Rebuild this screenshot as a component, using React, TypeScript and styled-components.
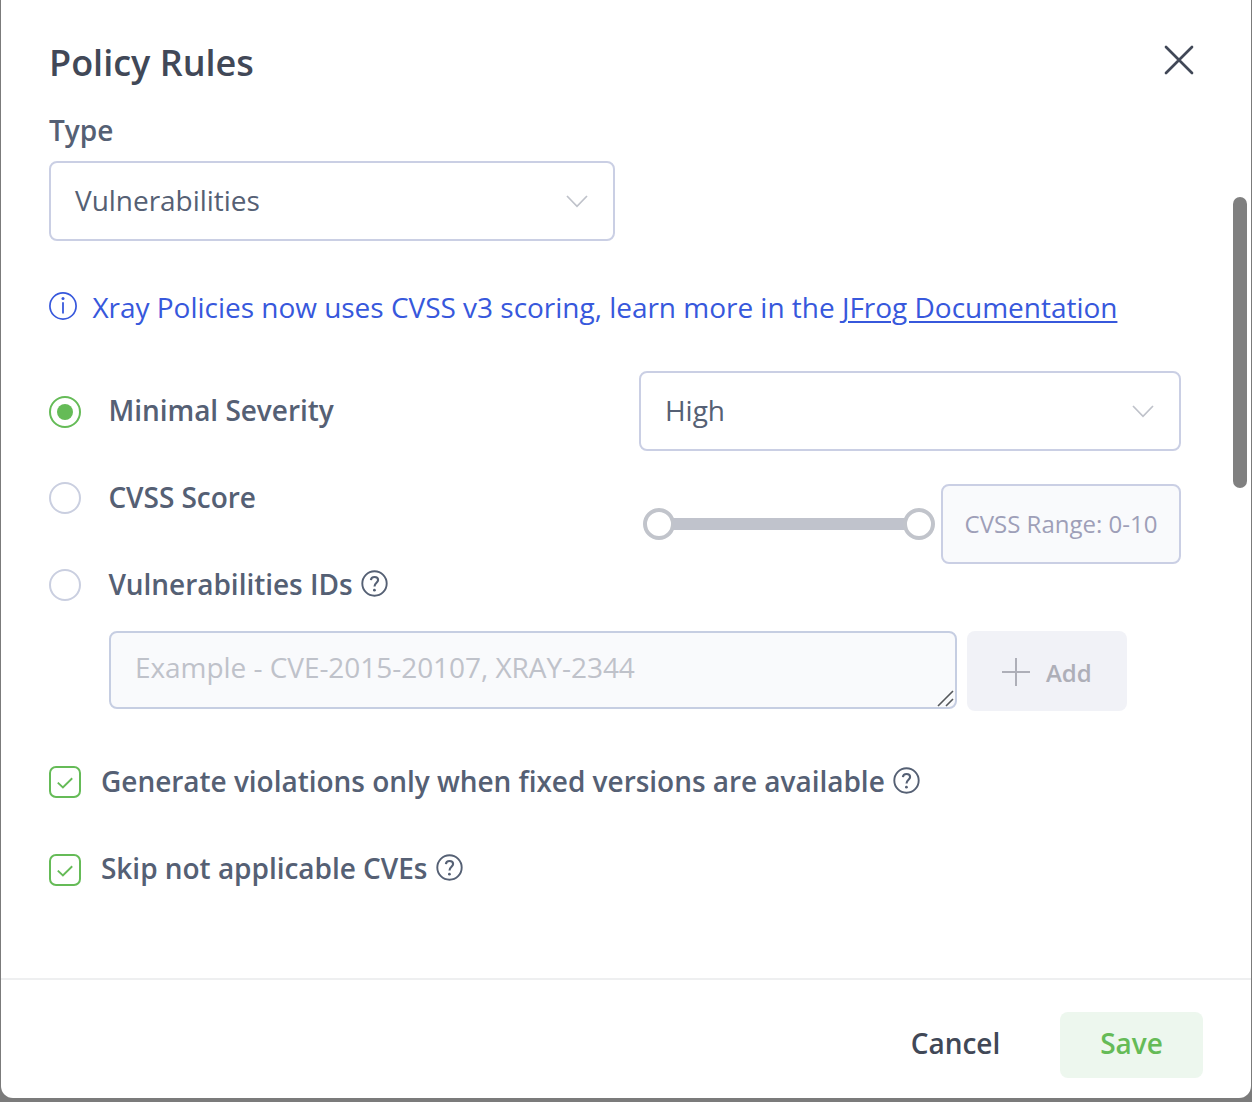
import React from "react";
import styled, { createGlobalStyle } from "styled-components";

const GlobalStyle = createGlobalStyle`
  *, *::before, *::after { box-sizing: border-box; }
  body {
    margin: 0;
    background: #7b7b7b;
    font-family: "Open Sans", "Noto Sans", sans-serif;
    color: #556074;
    letter-spacing: -0.03px;
    overflow: hidden;
  }
  button, textarea { font-family: inherit; }
`;

const Overlay = styled.div`
  height: 1102px;
  padding: 0 1px 4px;
  background: #7b7b7b;
`;

const Dialog = styled.section`
  position: relative;
  display: flex;
  flex-direction: column;
  height: 1098px;
  background: #fff;
  border-radius: 0 0 12px 12px;
`;

const Header = styled.header`
  display: flex;
  justify-content: space-between;
  align-items: flex-start;
  height: 106px;
  padding: 37px 55px 0 48px;
`;

const Title = styled.h1`
  margin: 1px 0 0;
  font-size: 36px;
  line-height: 50px;
  font-weight: 600;
  color: #414857;
  letter-spacing: 0;
`;

const IconButton = styled.button`
  display: flex;
  padding: 0;
  margin-top: 6px;
  border: 0;
  background: none;
  color: #414857;
`;

const Body = styled.main`
  display: flex;
  flex-direction: column;
  height: 872px;
  padding: 0 70px 0 48px;
`;

const Label = styled.span`
  font-size: 28px;
  line-height: 38px;
  font-weight: 600;
  white-space: nowrap;
`;

const TypeField = styled.div`
  display: flex;
  flex-direction: column;
  width: 566px;
  padding-top: 5px;
  gap: 12px;
`;

const Select = styled.div`
  display: flex;
  align-items: center;
  justify-content: space-between;
  height: 80px;
  padding: 0 25px 2px 24px;
  border: 2px solid #cacfe4;
  border-radius: 8px;
  background: #fff;
  font-size: 28px;
  line-height: 38px;

  svg { margin-top: 2px; }
`;

const Notice = styled.p`
  display: flex;
  align-items: center;
  height: 38px;
  margin: 47px 0 0;
  gap: 15.4px;
  font-size: 28px;
  line-height: 38px;
  letter-spacing: -0.02px;
  color: #3758dc;
  white-space: nowrap;

  svg { flex: none; margin-top: -2px; }
  a { color: inherit; text-decoration-thickness: 2px; text-underline-offset: 3px; }
`;

const Criteria = styled.div`
  display: grid;
  grid-template-columns: 590px 542px;
  margin-top: 45px;
`;

const Options = styled.div`
  display: flex;
  flex-direction: column;
  padding-top: 19px;
`;

const Option = styled.label<{ $gap?: number }>`
  display: flex;
  align-items: center;
  height: 40px;
  margin-bottom: ${(p) => p.$gap ?? 0}px;
  gap: 27.4px;
`;

const Radio = styled.span<{ $checked?: boolean }>`
  display: grid;
  place-items: center;
  width: 32px;
  height: 32px;
  margin-top: ${(p) => (p.$checked ? 4 : 2)}px;
  border: 2px solid ${(p) => (p.$checked ? "#65bb57" : "#cacfe0")};
  border-radius: 50%;

  &::after {
    content: "";
    width: 16px;
    height: 16px;
    border-radius: 50%;
    background: ${(p) => (p.$checked ? "#65bb57" : "transparent")};
  }
`;

const Helped = styled.span`
  display: flex;
  align-items: center;
  gap: 8.4px;

  svg { flex: none; margin-top: -2px; }
`;

const Controls = styled.div`
  display: flex;
  flex-direction: column;
  gap: 33px;
`;

const ScoreRow = styled.div`
  display: flex;
  align-items: center;
  gap: 6px;
  padding-left: 4px;
`;

const Slider = styled.div`
  display: flex;
  align-items: center;
  width: 292px;
  height: 32px;
`;

const Thumb = styled.span`
  flex: none;
  width: 32px;
  height: 32px;
  border: 4px solid #c1c4cb;
  border-radius: 50%;
  background: #fff;
`;

const Track = styled.span`
  flex: 1;
  height: 12px;
  margin: 0 -2px;
  background: #c0c3cc;
`;

const RangeBox = styled.div`
  display: flex;
  align-items: center;
  width: 240px;
  height: 80px;
  padding: 0 0 2px 21.6px;
  border: 2px solid #cacfe4;
  border-radius: 8px;
  background: #f9fafc;
  font-size: 24px;
  letter-spacing: 0;
  color: #9e9fb8;
  white-space: nowrap;
`;

const IdsRow = styled.div`
  display: flex;
  gap: 10px;
  height: 80px;
  margin: 27px 0 0 60px;
`;

const IdsBox = styled.div`
  display: flex;
  justify-content: space-between;
  width: 848px;
  height: 78px;
  padding: 15px 1px 0 24px;
  border: 2px solid #c6cee2;
  border-radius: 8px;
  background: #f9fafc;
  font-size: 28px;
  line-height: 38px;
  letter-spacing: -0.05px;
  color: #bfc2ca;

  svg { align-self: flex-end; }
`;

const AddButton = styled.button`
  display: flex;
  align-items: center;
  width: 160px;
  height: 80px;
  padding: 2px 0 0 35px;
  gap: 16px;
  border: 0;
  border-radius: 8px;
  background: #f1f2f7;
  color: #aeafb8;
  font-size: 24px;
  font-weight: 600;
`;

const CheckRow = styled.label<{ $top: number }>`
  display: flex;
  align-items: center;
  height: 32px;
  margin-top: ${(p) => p.$top}px;
  gap: 20px;
`;

const Checkbox = styled.span`
  display: grid;
  place-items: center;
  width: 32px;
  height: 32px;
  border: 2px solid #65bb57;
  border-radius: 7px;
  color: #65bb57;
`;

const CheckText = styled(Helped)<{ $lift: number }>`
  margin-top: -${(p) => p.$lift}px;
`;

const Footer = styled.footer`
  display: flex;
  justify-content: flex-end;
  align-items: flex-start;
  height: 120px;
  padding: 32px 48px 0 0;
  gap: 20px;
  border-top: 2px solid #eeeff0;
`;

const FooterButton = styled.button<{ $primary?: boolean }>`
  width: ${(p) => (p.$primary ? 143 : 169)}px;
  height: 66px;
  padding: 0 0 4px;
  border: 0;
  border-radius: 8px;
  background: ${(p) => (p.$primary ? "#edf7ee" : "transparent")};
  color: ${(p) => (p.$primary ? "#65bb57" : "#414857")};
  font-size: 28px;
  font-weight: 600;
`;

const ScrollThumb = styled.div`
  position: absolute;
  top: 197px;
  right: 4px;
  width: 14px;
  height: 291px;
  border-radius: 7px;
  background: #808080;
`;

const Chevron = () => (
  <svg width="22" height="14" viewBox="0 0 22 14" fill="none" stroke="#bfc2ca" strokeWidth="1.7">
    <path d="M1 2L11 12.3L21 2" />
  </svg>
);

const HelpIcon = () => (
  <svg width="27" height="27" viewBox="0 0 27 27" fill="none" stroke="#556074">
    <circle cx="13.5" cy="13.5" r="12.2" strokeWidth="1.9" />
    <path d="M9.9 10.2C10.1 8 11.6 7 13.5 7C15.6 7 17.1 8.2 17.1 10.1C17.1 12.7 13.5 12.9 13.5 16.4" strokeWidth="2.1" />
    <circle cx="13.4" cy="20.2" r="1.4" fill="#556074" stroke="none" />
  </svg>
);

const InfoIcon = () => (
  <svg width="28" height="28" viewBox="0 0 28 28" fill="none" stroke="#3758dc">
    <circle cx="14" cy="14" r="13.1" strokeWidth="1.7" />
    <path d="M14 10.2V21.5" strokeWidth="1.8" />
    <circle cx="14" cy="6.6" r="1.5" fill="#3758dc" stroke="none" />
  </svg>
);

const CheckIcon = () => (
  <svg width="18" height="14" viewBox="0 0 18 14" fill="none" stroke="currentColor" strokeWidth="1.9">
    <path d="M1.8 7.6L6.9 12.4L16.2 3.2" />
  </svg>
);

export default function App() {
  return (
    <Overlay>
      <GlobalStyle />
      <Dialog role="dialog" aria-labelledby="rules-title">
        <Header>
          <Title id="rules-title">Policy Rules</Title>
          <IconButton aria-label="Close">
            <svg width="34" height="34" viewBox="0 0 34 34" fill="none" stroke="currentColor" strokeWidth="2.7" strokeLinecap="round">
              <path d="M4 4L30 30M30 4L4 30" />
            </svg>
          </IconButton>
        </Header>
        <Body>
          <TypeField>
            <Label>Type</Label>
            <Select>Vulnerabilities<Chevron /></Select>
          </TypeField>
          <Notice>
            <InfoIcon />
            <span>
              Xray Policies now uses CVSS v3 scoring, learn more in the <a href="#docs">JFrog Documentation</a>
            </span>
          </Notice>
          <Criteria>
            <Options>
              <Option $gap={47}><Radio $checked /><Label>Minimal Severity</Label></Option>
              <Option $gap={47}><Radio /><Label>CVSS Score</Label></Option>
              <Option><Radio /><Helped><Label>Vulnerabilities IDs</Label><HelpIcon /></Helped></Option>
            </Options>
            <Controls>
              <Select>High<Chevron /></Select>
              <ScoreRow>
                <Slider><Thumb /><Track /><Thumb /></Slider>
                <RangeBox>CVSS Range: 0-10</RangeBox>
              </ScoreRow>
            </Controls>
          </Criteria>
          <IdsRow>
            <IdsBox>
              Example - CVE-2015-20107, XRAY-2344
              <svg width="17" height="17" viewBox="0 0 17 17" fill="none" stroke="#55585c" strokeWidth="1.6">
                <path d="M1 16L16 1M9 16L16 9" />
              </svg>
            </IdsBox>
            <AddButton>
              <svg width="28" height="28" viewBox="0 0 28 28" stroke="currentColor" strokeWidth="2">
                <path d="M0 14H28M14 0V28" />
              </svg>
              Add
            </AddButton>
          </IdsRow>
          <CheckRow $top={55}>
            <Checkbox><CheckIcon /></Checkbox>
            <CheckText $lift={2}><Label>Generate violations only when fixed versions are available</Label><HelpIcon /></CheckText>
          </CheckRow>
          <CheckRow $top={56}>
            <Checkbox><CheckIcon /></Checkbox>
            <CheckText $lift={4}><Label>Skip not applicable CVEs</Label><HelpIcon /></CheckText>
          </CheckRow>
        </Body>
        <Footer>
          <FooterButton>Cancel</FooterButton>
          <FooterButton $primary>Save</FooterButton>
        </Footer>
        <ScrollThumb />
      </Dialog>
    </Overlay>
  );
}
